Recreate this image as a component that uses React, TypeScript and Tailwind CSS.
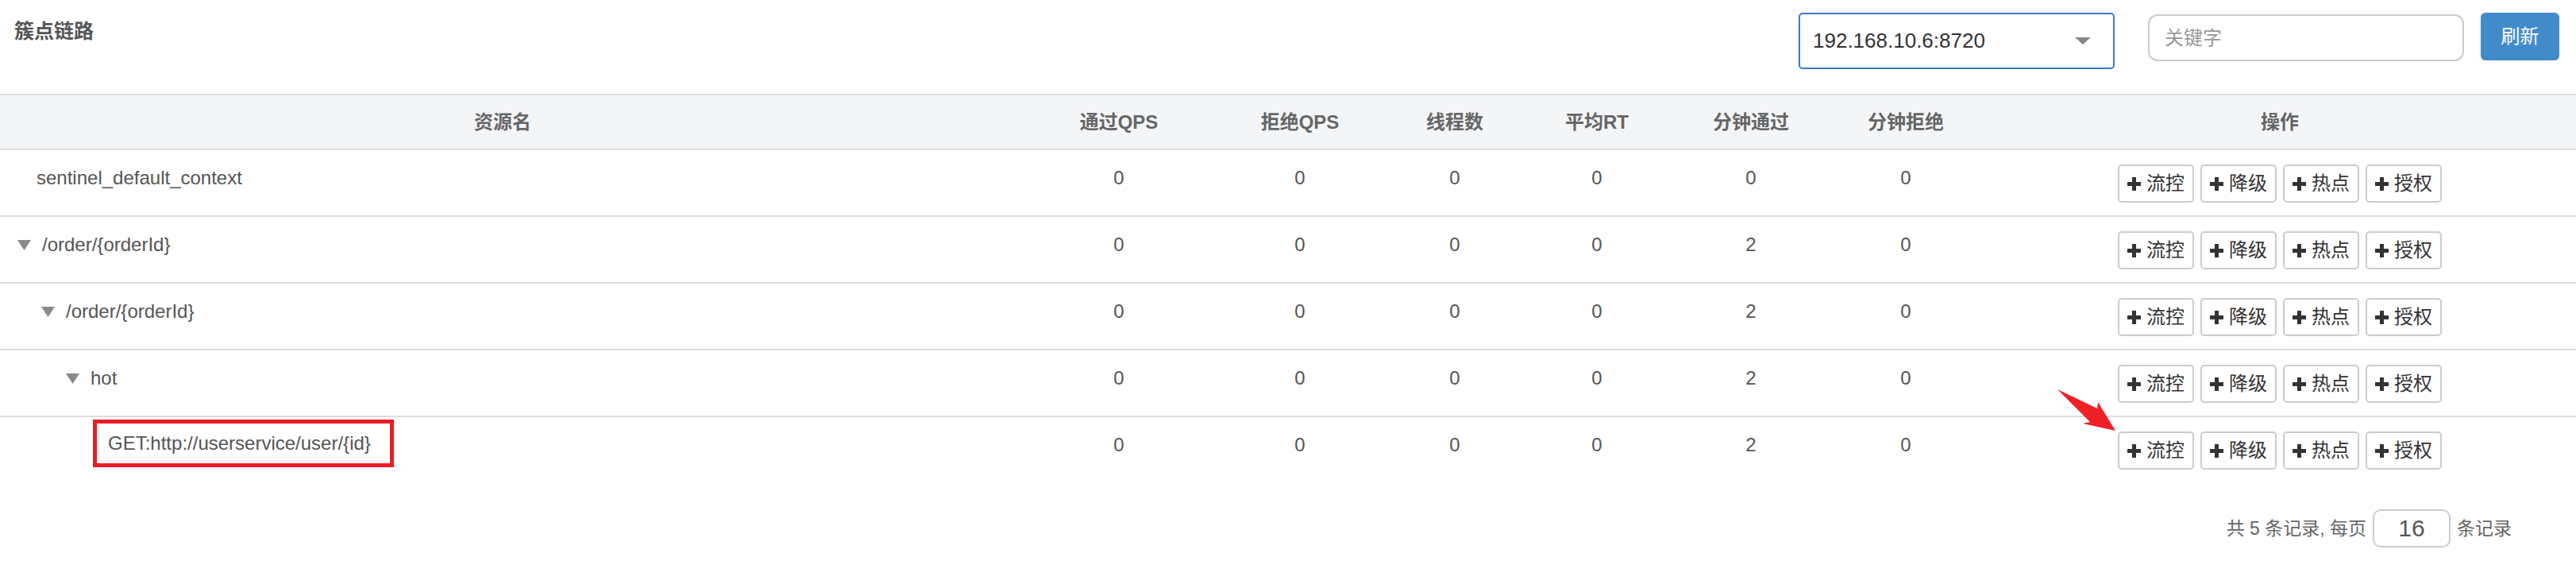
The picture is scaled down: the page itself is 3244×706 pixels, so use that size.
import React from 'react';

type Row = {
  name: string;
  pad: string;
  folder: boolean;
  marked?: boolean;
  stats: number[];
};

const rows: Row[] = [
  { name: 'sentinel_default_context', pad: 'pl-[46px]', folder: false, stats: [0, 0, 0, 0, 0, 0] },
  { name: '/order/{orderId}', pad: 'pl-[22px]', folder: true, stats: [0, 0, 0, 0, 2, 0] },
  { name: '/order/{orderId}', pad: 'pl-[52px]', folder: true, stats: [0, 0, 0, 0, 2, 0] },
  { name: 'hot', pad: 'pl-[83px]', folder: true, stats: [0, 0, 0, 0, 2, 0] },
  {
    name: 'GET:http://userservice/user/{id}',
    pad: 'pl-[117px]',
    folder: false,
    marked: true,
    stats: [0, 0, 0, 0, 2, 0],
  },
];

const headers = ['通过QPS', '拒绝QPS', '线程数', '平均RT', '分钟通过', '分钟拒绝'];
const actions = ['流控', '降级', '热点', '授权'];

const PlusIcon = () => (
  <svg width="17" height="17" viewBox="0 0 17 17">
    <rect x="6" y="0" width="5" height="17" fill="#333" />
    <rect x="0" y="6" width="17" height="5" fill="#333" />
  </svg>
);

const Caret = () => (
  <svg width="17" height="13" viewBox="0 0 17 13" className="mr-[14px] shrink-0">
    <polygon points="0,0 17,0 8.5,13" fill="#8a8a8a" />
  </svg>
);

const TreeRow = ({ row }: { row: Row }) => (
  <div className="grid h-[84px] grid-cols-[1266px_286px_170px_220px_138px_250px_140px_1fr] border-b-2 border-[#ddd] last:border-b-0">
    <div className={`flex items-start ${row.pad} ${row.marked ? 'pt-[3px]' : 'pt-[18px]'}`}>
      {row.marked ? (
        <div className="w-[379px] border-[5px] border-[#ec1c24] py-[8px] pl-[14px] leading-[34px]">
          {row.name}
        </div>
      ) : (
        <div className="flex h-[34px] items-center">
          {row.folder && <Caret />}
          <span>{row.name}</span>
        </div>
      )}
    </div>
    {row.stats.map((v, i) => (
      <div key={i} className="pt-[18px] text-center leading-[34px]">
        {v}
      </div>
    ))}
    <div className="flex justify-center gap-[8px] pl-[28px] pt-[18px]">
      {actions.map((a) => (
        <button
          key={a}
          className="flex h-[48px] w-[96px] items-center justify-center gap-[7px] rounded-[5px] border-2 border-[#ccc] bg-white text-[24px] text-[#333]"
        >
          <PlusIcon />
          {a}
        </button>
      ))}
    </div>
  </div>
);

export default function App() {
  return (
    <div className="relative h-[706px] w-[3244px] overflow-hidden bg-white font-['Liberation_Sans','Noto_Sans_CJK_SC',sans-serif] text-[24px] text-[#555]">
      {/* top bar */}
      <div className="flex h-[118px] items-start">
        <h1 className="pl-[18px] pt-[22px] text-[25px] font-bold leading-[34px] text-[#555]">簇点链路</h1>
        <div className="ml-auto flex items-start pr-[21px]">
          <div className="mt-[16px] flex h-[71px] w-[398px] items-center justify-between rounded-[5px] border-2 border-[#3a7bc0] pl-[16px] pr-[28px] text-[26px] text-[#333]">
            <span>192.168.10.6:8720</span>
            <svg width="20" height="9" viewBox="0 0 20 9">
              <polygon points="0,0 20,0 10,9" fill="#888" />
            </svg>
          </div>
          <input
            readOnly
            placeholder="关键字"
            className="ml-[42px] mt-[18px] h-[59px] w-[398px] rounded-[12px] border-2 border-[#ccc] px-[19px] text-[24px] outline-none placeholder:text-[#999]"
          />
          <button className="ml-[21px] mt-[16px] h-[60px] w-[99px] rounded-[6px] bg-[#428bca] text-[24px] text-white">
            刷新
          </button>
        </div>
      </div>

      {/* table */}
      <div className="grid h-[71px] grid-cols-[1266px_286px_170px_220px_138px_250px_140px_1fr] items-center border-y-2 border-[#ddd] bg-[#f4f5f7] font-bold text-[#666]">
        <div className="text-center">资源名</div>
        {headers.map((h) => (
          <div key={h} className="text-center">
            {h}
          </div>
        ))}
        <div className="pl-[28px] text-center">操作</div>
      </div>
      <div>
        {rows.map((r, i) => (
          <TreeRow key={i} row={r} />
        ))}
      </div>

      {/* pagination */}
      <div className="mt-[32px] flex items-center justify-end pr-[81px] text-[23px] text-[#666]">
        <span>共 5 条记录, 每页</span>
        <input
          readOnly
          value="16"
          className="mx-[8px] h-[48px] w-[98px] rounded-[10px] border-2 border-[#ccc] text-center text-[30px] text-[#555] outline-none"
        />
        <span>条记录</span>
      </div>

      {/* callout arrow */}
      <svg className="absolute left-[2585px] top-[485px]" width="90" height="65" viewBox="0 0 90 65">
        <polygon points="6,5 56,29 57,21 79,57 38,48 47,46" fill="#ee1f26" />
      </svg>
    </div>
  );
}
